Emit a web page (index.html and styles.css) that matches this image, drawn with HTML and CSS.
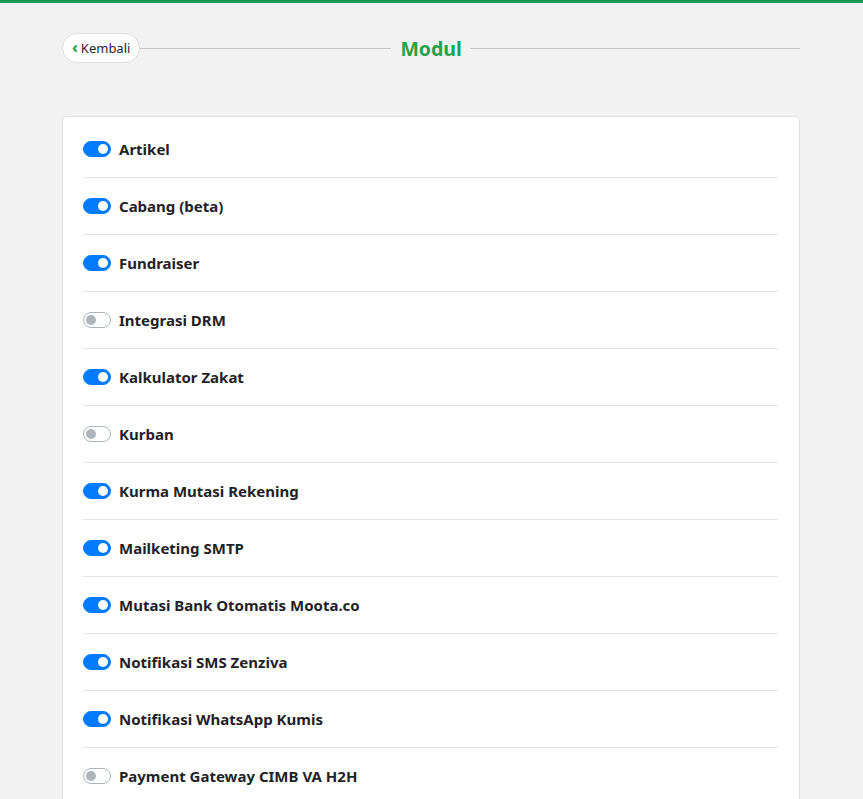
FILE: index.html
```html
<!DOCTYPE html>
<html lang="id">
<head>
    <meta charset="UTF-8">
    <meta name="viewport" content="width=device-width, initial-scale=1.0">
    <title>Modul</title>
    <link rel="stylesheet" href="styles.css">
</head>
<body>
    <div class="wrap">
        <header class="head">
            <a href="#" class="back"><span class="chev">&#8249;</span> Kembali</a>
            <span class="line"></span>
            <h1>Modul</h1>
            <span class="line"></span>
        </header>

        <section class="card">
            <div class="row"><span class="switch on"></span><span class="name">Artikel</span></div>
            <div class="row"><span class="switch on"></span><span class="name">Cabang (beta)</span></div>
            <div class="row"><span class="switch on"></span><span class="name">Fundraiser</span></div>
            <div class="row"><span class="switch"></span><span class="name">Integrasi DRM</span></div>
            <div class="row"><span class="switch on"></span><span class="name">Kalkulator Zakat</span></div>
            <div class="row"><span class="switch"></span><span class="name">Kurban</span></div>
            <div class="row"><span class="switch on"></span><span class="name">Kurma Mutasi Rekening</span></div>
            <div class="row"><span class="switch on"></span><span class="name">Mailketing SMTP</span></div>
            <div class="row"><span class="switch on"></span><span class="name">Mutasi Bank Otomatis Moota.co</span></div>
            <div class="row"><span class="switch on"></span><span class="name">Notifikasi SMS Zenziva</span></div>
            <div class="row"><span class="switch on"></span><span class="name">Notifikasi WhatsApp Kumis</span></div>
            <div class="row"><span class="switch"></span><span class="name">Payment Gateway CIMB VA H2H</span></div>
        </section>
    </div>
</body>
</html>
```

FILE: styles.css
```css
html, body {
    margin: 0;
    padding: 0;
}

body {
    background: #f2f2f2;
    border-top: 3px solid #159957;
    font-family: "Noto Sans", "Open Sans", sans-serif;
    color: #212529;
}

.wrap {
    width: 738px;
    margin-left: 62px;
}

.head {
    display: flex;
    align-items: center;
    height: 30px;
    margin-top: 30px;
}

.back {
    display: flex;
    align-items: center;
    height: 28px;
    padding: 0 9px 0 9px;
    background: #fff;
    border: 1px solid #dcdcdc;
    border-radius: 15px;
    color: #212529;
    font-size: 13px;
    text-decoration: none;
    white-space: nowrap;
}

.chev {
    color: #1aa34a;
    font-weight: 700;
    font-size: 16px;
    margin-right: 3px;
    line-height: 1;
    position: relative;
    top: -1px;
}

.line {
    flex: 1;
    height: 1px;
    background: #c8c8c8;
}

.head .line:first-of-type {
    flex: 0 0 251px;
}

h1 {
    margin: 0 8px 0 9px;
    font-size: 19.5px;
    font-weight: 700;
    color: #1ea54c;
}

.card {
    margin-top: 53px;
    background: #fff;
    border: 1px solid #e0e0e0;
    border-radius: 5px;
    padding: 4px 21px 40px 20px;
}

.row {
    display: flex;
    align-items: center;
    height: 56px;
    border-bottom: 1px solid #e3e3e3;
}

.row:last-child {
    border-bottom: none;
}

.switch {
    position: relative;
    width: 26px;
    height: 14px;
    border: 1px solid #adb5bd;
    border-radius: 8px;
    background: #fff;
    margin-right: 8px;
    flex: none;
}

.switch::after {
    content: "";
    position: absolute;
    top: 2px;
    left: 2px;
    width: 10px;
    height: 10px;
    border-radius: 50%;
    background: #adb5bd;
}

.switch.on {
    background: #007bff;
    border-color: #007bff;
}

.switch.on::after {
    left: 14px;
    background: #fff;
}

.name {
    font-size: 15px;
    font-weight: 700;
    color: #1f2226;
}
```
